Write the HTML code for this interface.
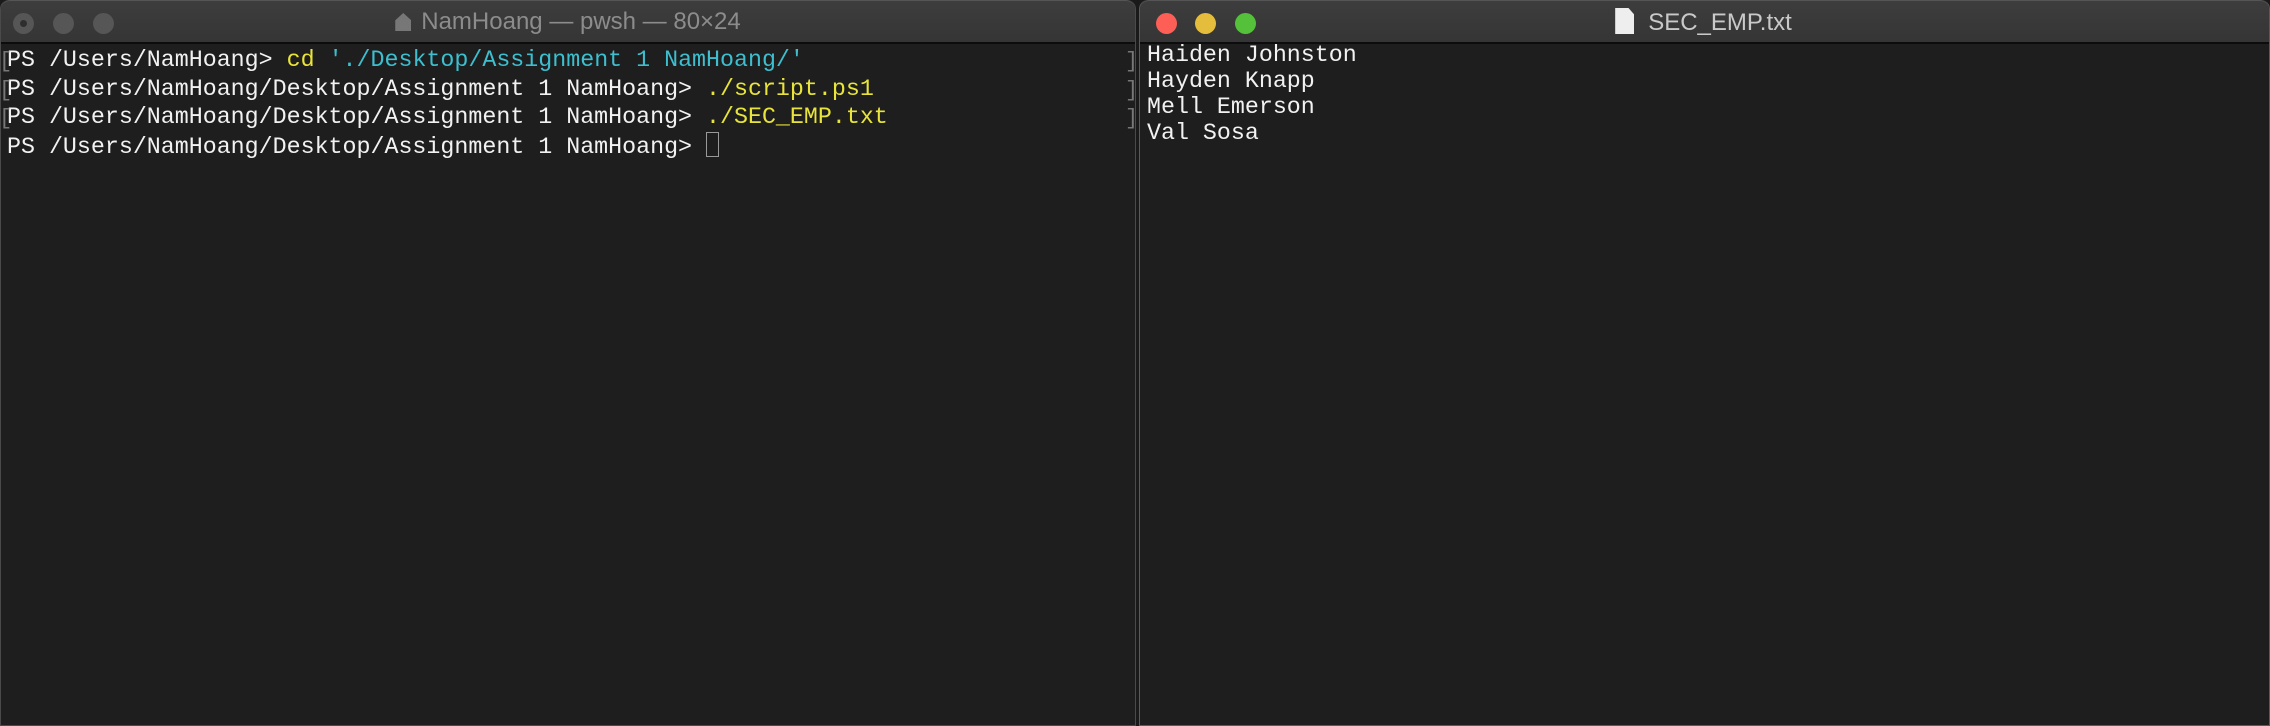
<!DOCTYPE html>
<html><head><meta charset="utf-8"><style>
html,body{margin:0;padding:0;width:2270px;height:726px;background:#1a1a1a;overflow:hidden;font-family:"Liberation Mono",monospace}
.win{position:absolute;top:0;height:726px;background:#1e1e1e;box-sizing:border-box;border-radius:9px 9px 0 0;overflow:hidden}
#l{left:0;width:1136px;border:1px solid #4a4a4a;border-top:none}
#r{left:1139px;width:1131px;border:1px solid #5a5a5a;border-top:none}
.tb{position:absolute;left:0;right:0;top:0;height:41px;background:linear-gradient(#3d3d3d,#353535);border-bottom:2px solid #0c0c0c;border-top:1px solid #555;border-radius:9px 9px 0 0}
.dot{position:absolute;top:12px;width:21px;height:21px;border-radius:50%}
.title{position:absolute;top:7px;left:0;right:0;text-align:center;font-family:"Liberation Sans",sans-serif;font-size:24px}
.t{position:absolute;font-size:23.3px;line-height:28.6px;white-space:pre;color:#f2f2f2;letter-spacing:0}
.y{color:#e8e43a}.c{color:#3dbfcf}
.br{position:absolute;color:#777;font-size:22px}
</style></head><body>
<div class="win" id="l">
 <div class="tb">
  <div class="dot" style="left:12px;background:#565656"><div style="position:absolute;left:7px;top:7px;width:7px;height:7px;border-radius:50%;background:#2e2e2e"></div></div>
  <div class="dot" style="left:52px;background:#565656"></div>
  <div class="dot" style="left:92px;background:#565656"></div>
  <div class="title" style="color:#8c8c8c"><span style="display:inline-block;width:16px;height:18px;background:#777;margin-right:10px;vertical-align:-2px;clip-path:polygon(50% 0,100% 40%,100% 100%,0 100%,0 40%)"></span>NamHoang — pwsh — 80×24</div>
 </div>
 <div class="t" style="left:6px;top:46px">PS /Users/NamHoang&gt; <span class="y">cd</span> <span class="c">'./Desktop/Assignment 1 NamHoang/'</span>
PS /Users/NamHoang/Desktop/Assignment 1 NamHoang&gt; <span class="y">./script.ps1</span>
PS /Users/NamHoang/Desktop/Assignment 1 NamHoang&gt; <span class="y">./SEC_EMP.txt</span>
PS /Users/NamHoang/Desktop/Assignment 1 NamHoang&gt; <span style="display:inline-block;width:11px;height:23px;border:1.5px solid #999;vertical-align:-4px"></span></div>
 <div class="br" style="left:-2px;top:48px;line-height:28.6px">[<br>[<br>[</div>
 <div class="br" style="left:1124px;top:48px;line-height:28.6px">]<br>]<br>]</div>
</div>
<div class="win" id="r">
 <div class="tb">
  <div class="dot" style="left:16px;background:#fd5f57"></div>
  <div class="dot" style="left:55px;background:#e5bd3c"></div>
  <div class="dot" style="left:95px;background:#55c13a"></div>
  <div class="title" style="color:#c9c9c9;left:-2px"><span style="display:inline-block;width:19px;height:26px;background:#eee;margin-right:14px;vertical-align:-4px;clip-path:polygon(0 0,70% 0,100% 25%,100% 100%,0 100%)"></span>SEC_EMP.txt</div>
 </div>
 <div class="t" style="left:7px;top:42px;line-height:26px">Haiden Johnston
Hayden Knapp
Mell Emerson
Val Sosa</div>
</div>
</body></html>
